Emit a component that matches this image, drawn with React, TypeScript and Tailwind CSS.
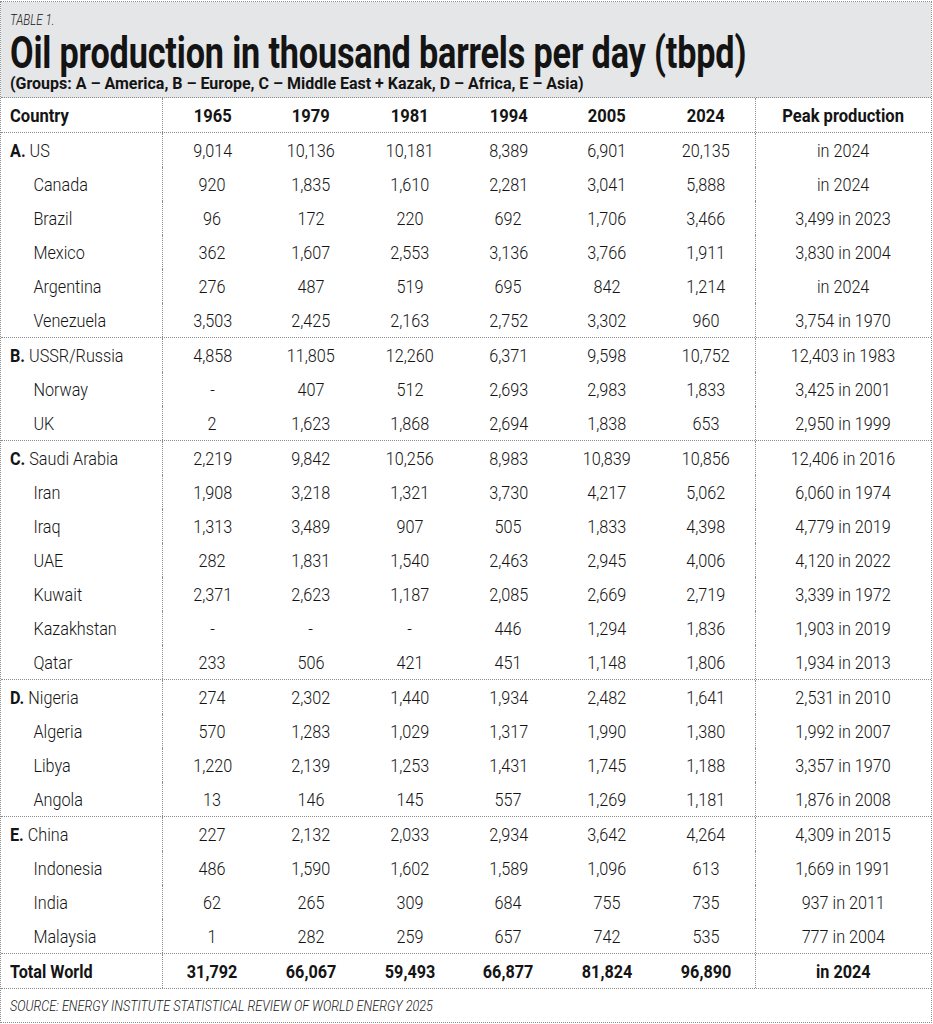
import React from "react";

type Row = { g?: string; name: string; v: string[]; peak: string; bold?: boolean };

const groups: Row[][] = [
  [
    { g: "A.", name: "US", v: ["9,014", "10,136", "10,181", "8,389", "6,901", "20,135"], peak: "in 2024" },
    { name: "Canada", v: ["920", "1,835", "1,610", "2,281", "3,041", "5,888"], peak: "in 2024" },
    { name: "Brazil", v: ["96", "172", "220", "692", "1,706", "3,466"], peak: "3,499 in 2023" },
    { name: "Mexico", v: ["362", "1,607", "2,553", "3,136", "3,766", "1,911"], peak: "3,830 in 2004" },
    { name: "Argentina", v: ["276", "487", "519", "695", "842", "1,214"], peak: "in 2024" },
    { name: "Venezuela", v: ["3,503", "2,425", "2,163", "2,752", "3,302", "960"], peak: "3,754 in 1970" },
  ],
  [
    { g: "B.", name: "USSR/Russia", v: ["4,858", "11,805", "12,260", "6,371", "9,598", "10,752"], peak: "12,403 in 1983" },
    { name: "Norway", v: ["-", "407", "512", "2,693", "2,983", "1,833"], peak: "3,425 in 2001" },
    { name: "UK", v: ["2", "1,623", "1,868", "2,694", "1,838", "653"], peak: "2,950 in 1999" },
  ],
  [
    { g: "C.", name: "Saudi Arabia", v: ["2,219", "9,842", "10,256", "8,983", "10,839", "10,856"], peak: "12,406 in 2016" },
    { name: "Iran", v: ["1,908", "3,218", "1,321", "3,730", "4,217", "5,062"], peak: "6,060 in 1974" },
    { name: "Iraq", v: ["1,313", "3,489", "907", "505", "1,833", "4,398"], peak: "4,779 in 2019" },
    { name: "UAE", v: ["282", "1,831", "1,540", "2,463", "2,945", "4,006"], peak: "4,120 in 2022" },
    { name: "Kuwait", v: ["2,371", "2,623", "1,187", "2,085", "2,669", "2,719"], peak: "3,339 in 1972" },
    { name: "Kazakhstan", v: ["-", "-", "-", "446", "1,294", "1,836"], peak: "1,903 in 2019" },
    { name: "Qatar", v: ["233", "506", "421", "451", "1,148", "1,806"], peak: "1,934 in 2013" },
  ],
  [
    { g: "D.", name: "Nigeria", v: ["274", "2,302", "1,440", "1,934", "2,482", "1,641"], peak: "2,531 in 2010" },
    { name: "Algeria", v: ["570", "1,283", "1,029", "1,317", "1,990", "1,380"], peak: "1,992 in 2007" },
    { name: "Libya", v: ["1,220", "2,139", "1,253", "1,431", "1,745", "1,188"], peak: "3,357 in 1970" },
    { name: "Angola", v: ["13", "146", "145", "557", "1,269", "1,181"], peak: "1,876 in 2008" },
  ],
  [
    { g: "E.", name: "China", v: ["227", "2,132", "2,033", "2,934", "3,642", "4,264"], peak: "4,309 in 2015" },
    { name: "Indonesia", v: ["486", "1,590", "1,602", "1,589", "1,096", "613"], peak: "1,669 in 1991" },
    { name: "India", v: ["62", "265", "309", "684", "755", "735"], peak: "937 in 2011" },
    { name: "Malaysia", v: ["1", "282", "259", "657", "742", "535"], peak: "777 in 2004" },
  ],
  [
    { name: "Total World", v: ["31,792", "66,067", "59,493", "66,877", "81,824", "96,890"], peak: "in 2024", bold: true },
  ],
];

const gridCols = "grid grid-cols-[162px_repeat(6,minmax(0,1fr))_176px]";
const line = "border-dotted border-[#8c8c8c]";

function DataRow({ r }: { r: Row }) {
  const w = r.bold ? "font-bold" : "font-light";
  return (
    <div className={`${gridCols} h-[34px] items-stretch text-[18px] leading-[22px]`}>
      <div className={`flex items-center border-r ${line} pl-[9px] pt-[2px] whitespace-nowrap`}>
        {r.g ? (
          <span className="inline-block origin-left scale-x-[0.9]">
            <span className="font-bold">{r.g}</span>
            <span className="font-light"> {r.name}</span>
          </span>
        ) : r.bold ? (
          <span className="inline-block origin-left scale-x-[0.9] font-bold">{r.name}</span>
        ) : (
          <span className="inline-block origin-left scale-x-[0.9] pl-[26px] font-light">{r.name}</span>
        )}
      </div>
      {r.v.map((x, i) => (
        <div key={i} className={`flex items-center justify-center pt-[2px] ${w}`}>
          <span className="inline-block scale-x-[0.9] whitespace-nowrap">{x}</span>
        </div>
      ))}
      <div className={`flex items-center justify-center border-l ${line} pt-[2px] ${w}`}>
        <span className="inline-block scale-x-[0.9] whitespace-nowrap">{r.peak}</span>
      </div>
    </div>
  );
}

export default function App() {
  return (
    <div className="w-[933px] h-[1024px] bg-white pt-px text-[#141414] font-['Roboto',sans-serif]">
      <div className={`w-[932px] border ${line}`}>
        <div className={`h-[96px] bg-[#e5e6e7] border-b ${line} pl-[9px] pt-[10px]`}>
          <div className="h-[16px] leading-[16px] whitespace-nowrap">
            <span className="inline-block origin-left scale-x-[0.83] text-[14px] italic font-light">TABLE 1.</span>
          </div>
          <div className="mt-[5px] h-[40px] leading-[40px] whitespace-nowrap">
            <span className="inline-block origin-left scale-x-[0.777] text-[44px] font-bold tracking-[-0.2px]">
              Oil production in thousand barrels per day (tbpd)
            </span>
          </div>
          <div className="h-[20px] leading-[20px] whitespace-nowrap">
            <span className="inline-block origin-left scale-x-[0.94] text-[17px] font-bold">
              (Groups: A – America, B – Europe, C – Middle East + Kazak, D – Africa, E – Asia)
            </span>
          </div>
        </div>
        <div className={`${gridCols} h-[35px] border-b ${line} font-bold text-[18px] leading-[22px]`}>
          <div className={`flex items-center border-r ${line} pl-[9px] pt-[2px]`}>
            <span className="inline-block origin-left scale-x-[0.92]">Country</span>
          </div>
          {["1965", "1979", "1981", "1994", "2005", "2024"].map((y) => (
            <div key={y} className="flex items-center justify-center pt-[2px]">
              <span className="inline-block scale-x-[0.92]">{y}</span>
            </div>
          ))}
          <div className={`flex items-center justify-center border-l ${line} pt-[2px]`}>
            <span className="inline-block scale-x-[0.92] whitespace-nowrap">Peak production</span>
          </div>
        </div>
        {groups.map((g, gi) => (
          <div key={gi} className={`border-b ${line}`}>
            {g.map((r, ri) => (
              <DataRow key={ri} r={r} />
            ))}
          </div>
        ))}
        <div className="h-[33px] flex items-center pl-[9px] pt-[1px] whitespace-nowrap">
          <span className="inline-block origin-left scale-x-[0.84] text-[15px] italic font-light">
            SOURCE: ENERGY INSTITUTE STATISTICAL REVIEW OF WORLD ENERGY 2025
          </span>
        </div>
      </div>
    </div>
  );
}
